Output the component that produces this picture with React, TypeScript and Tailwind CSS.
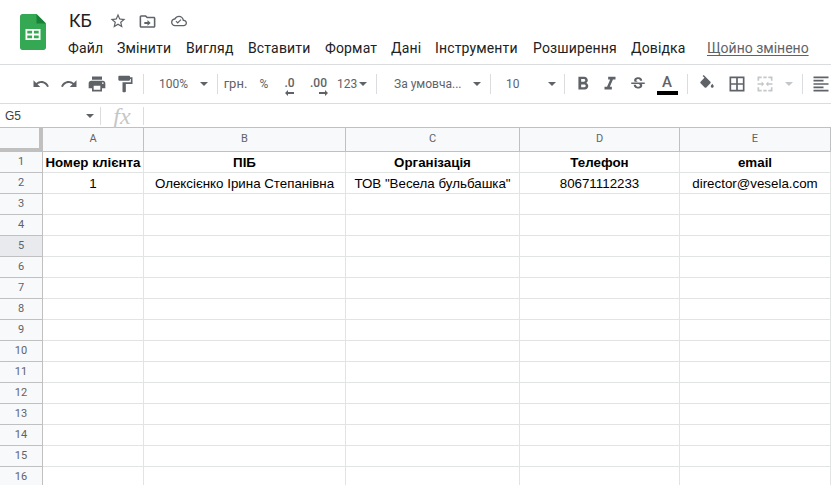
const menu = [
  { label: "Файл", cls: "w-[49px]" },
  { label: "Змінити", cls: "w-[69px]" },
  { label: "Вигляд", cls: "w-[62px]" },
  { label: "Вставити", cls: "w-[77px]" },
  { label: "Формат", cls: "w-[66px]" },
  { label: "Дані", cls: "w-[44px]" },
  { label: "Інструменти", cls: "w-[98px]" },
  { label: "Розширення", cls: "w-[98px]" },
  { label: "Довідка", cls: "w-[76px]" },
];

const Icon = ({ d, size = 18, className = "text-[#5f6368]" }: { d: string; size?: number; className?: string }) => (
  <svg width={size} height={size} viewBox="0 0 24 24" fill="currentColor" className={className}>
    <path d={d} />
  </svg>
);

const Caret = ({ className = "border-t-[#5f6368]" }: { className?: string }) => (
  <div className={`w-0 h-0 border-x-[4px] border-x-transparent border-t-[4px] ${className}`} />
);

const Sep = ({ className = "" }: { className?: string }) => <div className={`w-px h-5 bg-[#dadce0] shrink-0 ${className}`} />;

const Btn = ({ children, className = "w-7" }: { children: React.ReactNode; className?: string }) => (
  <div className={`h-6 flex items-center justify-center shrink-0 ${className}`}>{children}</div>
);

const paths = {
  undo: "M12.5 8c-2.65 0-5.05.99-6.9 2.6L2 7v9h9l-3.62-3.62c1.39-1.16 3.16-1.88 5.12-1.88 3.54 0 6.55 2.31 7.6 5.5l2.37-.78C21.08 11.03 17.15 8 12.5 8z",
  redo: "M18.4 10.6C16.55 8.99 14.15 8 11.5 8c-4.65 0-8.58 3.03-9.96 7.22L3.9 16c1.05-3.19 4.05-5.5 7.6-5.5 1.95 0 3.73.72 5.12 1.88L13 16h9V7l-3.6 3.6z",
  print: "M19 8H5c-1.66 0-3 1.34-3 3v6h4v4h12v-4h4v-6c0-1.66-1.34-3-3-3zm-3 11H8v-5h8v5zm3-7c-.55 0-1-.45-1-1s.45-1 1-1 1 .45 1 1-.45 1-1 1zm-1-9H6v4h12V3z",
  paint: "M18 4V3c0-.55-.45-1-1-1H5c-.55 0-1 .45-1 1v4c0 .55.45 1 1 1h12c.55 0 1-.45 1-1V6h1v4H9v11c0 .55.45 1 1 1h2c.55 0 1-.45 1-1v-9h8V4h-3z",
  bold: "M15.6 10.79c.97-.67 1.65-1.77 1.65-2.79 0-2.26-1.75-4-4-4H7v14h7.04c2.09 0 3.71-1.7 3.71-3.79 0-1.52-.86-2.82-2.15-3.42zM10 6.5h3c.83 0 1.5.67 1.5 1.5s-.67 1.5-1.5 1.5h-3v-3zm3.5 9H10v-3h3.5c.83 0 1.5.67 1.5 1.5s-.67 1.5-1.5 1.5z",
  italic: "M10 4v3h2.21l-3.42 8H6v3h8v-3h-2.21l3.42-8H18V4z",
  strike: "M7.24 8.75c-.26-.48-.39-1.03-.39-1.67 0-.61.13-1.16.4-1.67.26-.5.63-.93 1.11-1.29.48-.35 1.05-.63 1.7-.83.66-.19 1.39-.29 2.18-.29.81 0 1.54.11 2.21.34.66.22 1.23.54 1.69.94.47.4.83.88 1.08 1.43.25.55.38 1.15.38 1.81h-3.01c0-.31-.05-.59-.15-.85-.09-.27-.24-.49-.44-.68-.2-.19-.45-.33-.75-.44-.3-.1-.66-.16-1.06-.16-.39 0-.74.04-1.03.13-.29.09-.53.21-.72.36-.19.16-.34.34-.44.55-.1.21-.15.43-.15.66 0 .48.25.88.74 1.21.38.25.77.48 1.41.7H7.39c-.05-.08-.11-.17-.15-.25zM21 12v-2H3v2h9.62c.18.07.4.14.55.2.37.17.66.34.87.51.21.17.35.36.43.57.07.2.11.43.11.69 0 .23-.05.45-.14.66-.09.2-.23.38-.42.53-.19.15-.42.26-.71.35-.29.08-.63.13-1.01.13-.43 0-.83-.04-1.18-.13s-.66-.23-.91-.42c-.25-.19-.45-.44-.59-.75-.14-.31-.25-.76-.25-1.21H6.4c0 .55.08 1.13.24 1.58.16.45.37.85.65 1.21.28.35.6.66.98.92.37.26.78.48 1.22.65.44.17.9.3 1.38.39.48.08.96.13 1.44.13.8 0 1.53-.09 2.18-.28s1.21-.45 1.67-.79c.46-.34.82-.77 1.07-1.27s.38-1.07.38-1.71c0-.6-.1-1.14-.31-1.61-.05-.11-.11-.23-.17-.33H21z",
  fill: "M16.56 8.94L7.62 0 6.21 1.41l2.38 2.38-5.15 5.15c-.59.59-.59 1.54 0 2.12l5.5 5.5c.29.29.68.44 1.06.44s.77-.15 1.06-.44l5.5-5.5c.59-.58.59-1.53 0-2.12zM19 11.5s-2 2.17-2 3.5c0 1.1.9 2 2 2s2-.9 2-2c0-1.33-2-3.5-2-3.5z",
  borders: "M3 3v18h18V3H3zm8 16H5v-6h6v6zm0-8H5V5h6v6zm8 8h-6v-6h6v6zm0-8h-6V5h6v6z",
  merge: "M3 3h5v2H5v3H3zM10 3h4v2h-4zM16 3h5v5h-2V5h-3zM3 16h2v3h3v2H3zM10 19h4v2h-4zM19 16h2v5h-5v-2h3zM3 11h5V9l3 3-3 3v-2H3zM21 11h-5V9l-3 3 3 3v-2h5z",
  align: "M15 15H3v2h12v-2zm0-8H3v2h12V7zM3 13h18v-2H3v2zm0 8h18v-2H3v2zM3 3v2h18V3H3z",
  star: "M22 9.24l-7.19-.62L12 2 9.19 8.63 2 9.24l5.46 4.73L5.82 21 12 17.27 18.18 21l-1.63-7.03L22 9.24zM12 15.4l-3.76 2.27 1-4.28-3.32-2.88 4.38-.38L12 6.1l1.71 4.04 4.38.38-3.32 2.88 1 4.28L12 15.4z",
  folder: "M20 6h-8l-2-2H4c-1.1 0-2 .9-2 2v12c0 1.1.9 2 2 2h16c1.1 0 2-.9 2-2V8c0-1.1-.9-2-2-2zm0 12H4V6h5.17l2 2H20v10zM12 10v2.5H8v2.5h4V17.5l4-3.75z",
  cloud: "M19.35 10.04C18.67 6.59 15.64 4 12 4 9.11 4 6.6 5.64 5.35 8.04 2.34 8.36 0 10.91 0 14c0 3.31 2.69 6 6 6h13c2.76 0 5-2.24 5-5 0-2.64-2.05-4.78-4.65-4.96zM19 18H6c-2.21 0-4-1.79-4-4 0-2.05 1.53-3.76 3.56-3.97l1.07-.11.5-.95C8.08 7.14 9.94 6 12 6c2.62 0 4.88 1.86 5.39 4.43l.3 1.5 1.53.11c1.56.1 2.78 1.41 2.78 2.96 0 1.65-1.35 3-3 3zM10 13.6l-2-2-1.2 1.2 3.2 3.2 5.6-5.6-1.2-1.2z",
};

const Logo = () => (
  <svg width="26" height="36" viewBox="0 0 26 36">
    <path d="M16.5 0H2.4C1.1 0 0 1.1 0 2.4v31.2C0 34.9 1.1 36 2.4 36h21.2c1.3 0 2.4-1.1 2.4-2.4V9.5z" fill="#34a853" />
    <path d="M16.5 0v9.5H26z" fill="#188038" />
    <path d="M5.5 15v11h15V15zm6.6 9.2H7.3v-2.8h4.8zm0-4.6H7.3v-2.8h4.8zm6.6 4.6h-4.8v-2.8h4.8zm0-4.6h-4.8v-2.8h4.8z" fill="#fff" />
  </svg>
);

const columns = ["A", "B", "C", "D", "E"];
const rows = Array.from({ length: 16 }, (_, i) => i + 1);
const data: { [key: number]: string[] } = {
  1: ["Номер клієнта", "ПІБ", "Організація", "Телефон", "email"],
  2: ["1", "Олексієнко Ірина Степанівна", 'ТОВ "Весела бульбашка"', "80671112233", "director@vesela.com"],
};

const App = () => {
  return (
    <div className="w-[831px] h-[485px] overflow-hidden bg-white flex flex-col font-['Roboto',sans-serif]">
      {/* header */}
      <div className="h-[65px] shrink-0 flex border-b border-[#dadce0]">
        <div className="w-[68px] shrink-0 pl-5 pt-[14px]">
          <Logo />
        </div>
        <div className="flex flex-col flex-1">
          <div className="h-[30px] mt-[6px] mb-[2px] flex items-center">
            <span className="text-[18px] leading-6 text-[#202124] w-[41px] pl-px">КБ</span>
            <Icon d={paths.star} size={18} className="text-[#5f6368] mr-[11px]" />
            <Icon d={paths.folder} size={19} className="text-[#5f6368] mr-[14px]" />
            <Icon d={paths.cloud} size={16} className="text-[#5f6368]" />
          </div>
          <div className="flex items-center h-5">
            {menu.map((item) => (
              <span key={item.label} className={`text-[14px] leading-5 tracking-[0.15px] text-[#202124] shrink-0 ${item.cls}`}>
                {item.label}
              </span>
            ))}
            <span className="text-[14px] leading-5 text-[#5f6368] underline underline-offset-2 whitespace-nowrap">Щойно змінено</span>
          </div>
        </div>
      </div>

      {/* toolbar */}
      <div className="h-[39px] shrink-0 flex items-center pl-[27px] border-b border-[#dadce0]">
        <Btn><Icon d={paths.undo} /></Btn>
        <Btn><Icon d={paths.redo} /></Btn>
        <Btn><Icon d={paths.print} size={20} /></Btn>
        <Btn><Icon d={paths.paint} size={20} /></Btn>
        <Sep className="ml-1" />
        <div className="w-[73px] h-6 shrink-0 flex items-center pl-[15px] text-[12px] text-[#5f6368]">
          <span className="w-[41px]">100%</span>
          <Caret />
        </div>
        <Sep />
        <Btn className="w-[37px] pr-[2px] text-[13px] text-[#5f6368]">грн.</Btn>
        <Btn className="w-[17px] text-[12px] text-[#5f6368] pl-[1px]">%</Btn>
        <Btn className="w-[32px] relative text-[12px] font-medium text-[#5f6368] pl-[3px] -mt-[2px]">
          .0
          <svg width="9" height="6" viewBox="0 0 9 6" className="absolute left-[13px] top-[19px] text-[#5f6368]" fill="currentColor">
            <path d="M3 0v2h6v2H3v2L0 3z" />
          </svg>
        </Btn>
        <Btn className="w-[29px] relative text-[12px] font-medium text-[#5f6368] -mt-[2px]">
          .00
          <svg width="9" height="6" viewBox="0 0 9 6" className="absolute left-[15px] top-[19px] text-[#5f6368]" fill="currentColor">
            <path d="M6 0v2H0v2h6v2l3-3z" />
          </svg>
        </Btn>
        <div className="w-[43px] h-6 shrink-0 flex items-center pl-[4px] gap-[2px] text-[12px] text-[#5f6368]">
          123
          <Caret />
        </div>
        <Sep />
        <div className="w-[113px] h-6 shrink-0 flex items-center pl-[17px] text-[12px] text-[#5f6368]">
          <span className="w-[79px] whitespace-nowrap">За умовча...</span>
          <Caret />
        </div>
        <Sep />
        <div className="w-[73px] h-6 shrink-0 flex items-center pl-[15px] text-[12px] text-[#5f6368]">
          <span className="w-[42px]">10</span>
          <Caret />
        </div>
        <Sep />
        <Btn className="w-[31px] pl-[4px]"><Icon d={paths.bold} size={22} /></Btn>
        <Btn><Icon d={paths.italic} size={22} /></Btn>
        <Btn><Icon d={paths.strike} /></Btn>
        <Btn className="w-[30px] relative">
          <span className="text-[15px] leading-4 font-medium text-[#5f6368] -mt-[4px]">A</span>
          <div className="absolute left-[5px] bottom-[1px] w-[21px] h-1 bg-black" />
        </Btn>
        <Sep className="ml-[5px]" />
        <Btn className="w-[37px] pl-[1px]"><Icon d={paths.fill} /></Btn>
        <Btn className="w-[23px]"><Icon d={paths.borders} size={20} /></Btn>
        <Btn className="w-[34px]"><Icon d={paths.merge} size={20} className="text-[#c4c7c9]" /></Btn>
        <Btn className="w-[14px]"><Caret className="border-t-[#c4c7c9]" /></Btn>
        <Sep className="ml-[6px]" />
        <Btn className="w-[36px]"><Icon d={paths.align} size={20} /></Btn>
      </div>

      {/* formula bar */}
      <div className="h-6 shrink-0 flex items-center border-b border-[#c0c0c0]">
        <div className="w-[100px] flex items-center pl-[5px] text-[12px] text-[#3c4043] font-['Liberation_Sans',sans-serif]">
          <span className="w-[81px]">G5</span>
          <Caret />
        </div>
        <Sep className="h-[18px]" />
        <div className="w-[42px] text-center text-[24px] leading-6 italic text-[#c4c7c9] font-['Liberation_Serif',serif]">fx</div>
        <Sep className="h-[18px]" />
      </div>

      {/* sheet */}
      <div className="flex-1 min-h-0 overflow-hidden font-['Liberation_Sans',sans-serif]">
        <div className="grid grid-cols-[43px_101px_202px_174px_160px_151px] grid-rows-[24px] auto-rows-[21px]">
          <div className="bg-[#f8f9fa] border-r-[4px] border-b-[4px] border-[#c0c0c0]" />
          {columns.map((col) => (
            <div key={col} className="bg-[#f8f9fa] border-r border-b border-[#c0c0c0] flex items-center justify-center text-[11px] text-[#5f6368] font-['Roboto',sans-serif]">
              {col}
            </div>
          ))}
          {rows.map((row) => (
            <div key={row} className="contents">
              <div className={`border-r border-b border-[#c0c0c0] flex items-center justify-center text-[11px] text-[#5f6368] font-['Roboto',sans-serif] ${row === 5 ? "bg-[#e8eaed]" : "bg-[#f8f9fa]"}`}>
                {row}
              </div>
              {columns.map((col, i) => (
                <div
                  key={col}
                  className={`border-r border-b border-[#e2e3e3] flex items-center justify-center pt-px whitespace-nowrap overflow-hidden text-[13.33px] text-black ${row === 1 ? "font-bold" : ""}`}
                >
                  {data[row]?.[i]}
                </div>
              ))}
            </div>
          ))}
        </div>
      </div>
    </div>
  );
};

export default App;
